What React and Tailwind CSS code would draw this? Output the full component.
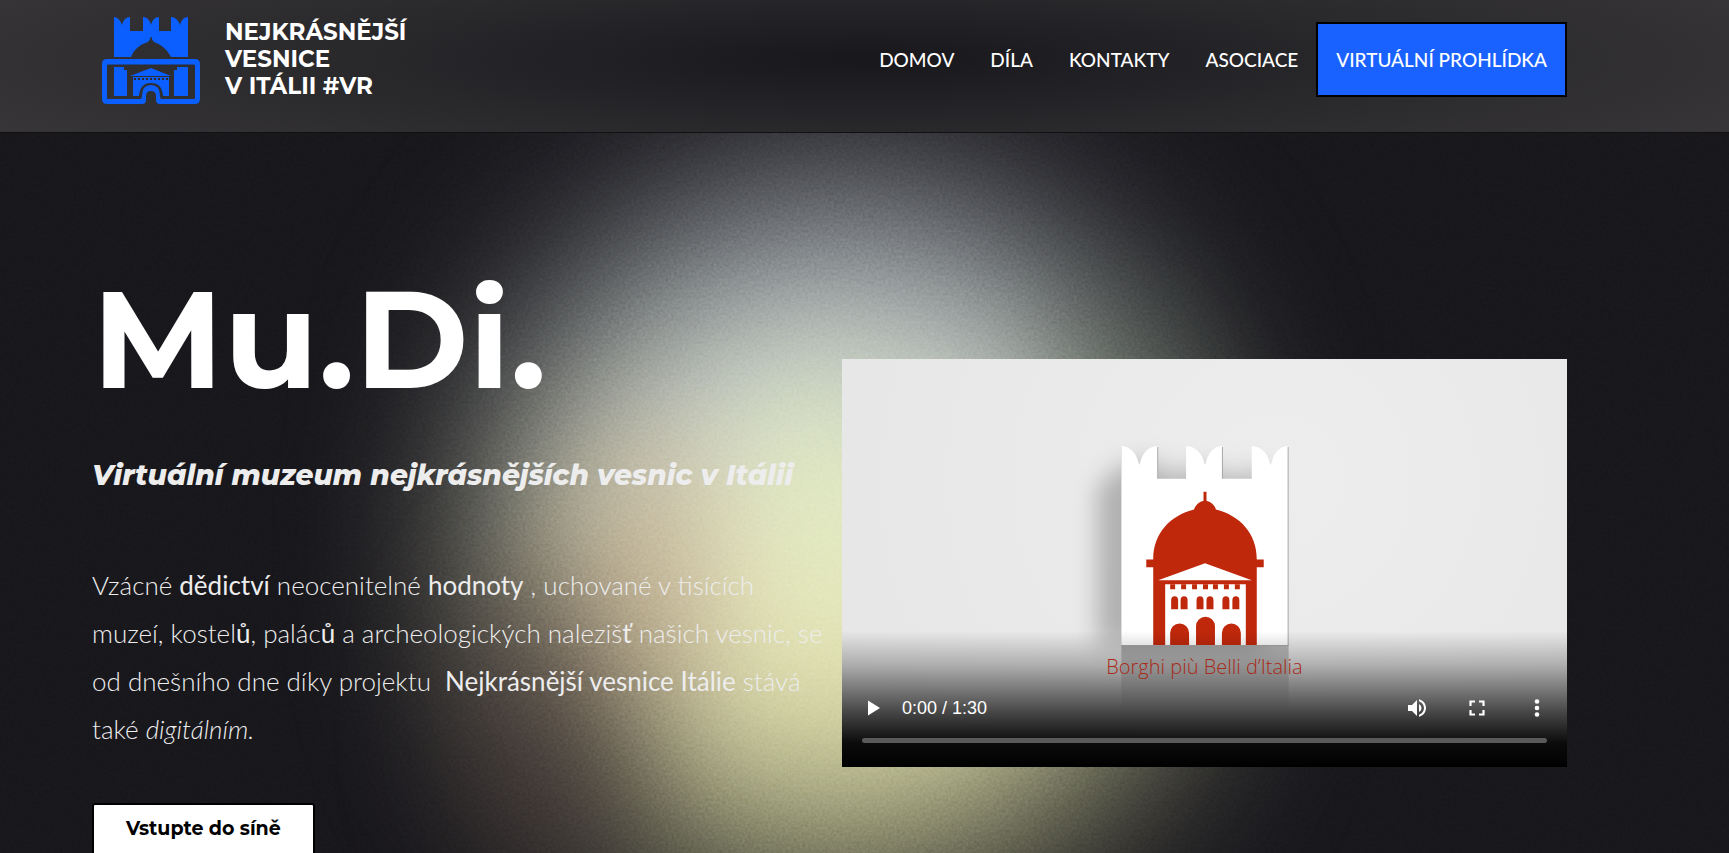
import React from "react";

const nav = ["DOMOV", "DÍLA", "KONTAKTY", "ASOCIACE"];

function Logo() {
  return (
    <svg viewBox="0 0 98 90" className="h-[90px] w-[98px] shrink-0" fill="#0b5fff" aria-hidden="true">
      <path d="M12 1Q17 1 20 9Q22 1 28 1V15H41V1Q47 1 49 9Q51 1 57 1V15H69V1Q75 1 78 9Q80 1 86 1V41H69C65 33 58 28 52 26Q50 24.500 49.500 21H48.500Q48 24.500 46 26C39 28 32 33 29 41H12Z" />
      <path d="M5 43H93Q98 43 98 48V83Q98 88 93 88H58Q54 88 54 84V80Q54 75 49 75T44 80V84Q44 88 40 88H5Q0 88 0 83V48Q0 43 5 43ZM6 48.500Q5 48.500 5 50V82Q5 83 6 83H38Q40 83 40 80Q40 69 49 69T58 80Q58 83 60 83H92Q93 83 93 82V50Q93 48.500 92 48.500Z" fillRule="evenodd" />
      <path d="M12 51H22V54H25V80H12ZM75 51H86V80H72V54H75ZM49 52L69 60H28ZM31 61H67V80H61Q60 67 49 67T37 80H31Z" />
      <path d="M33 62v2M37 62v2M41 62v2M45 62v2M49 62v2M53 62v2M57 62v2M61 62v2M65 62v2" stroke="#29282b" strokeWidth="2" />
    </svg>
  );
}

function Glow() {
  return (
    <svg viewBox="0 0 1729 720" preserveAspectRatio="none" className="absolute inset-0 -z-10 h-full w-full" aria-hidden="true">
      <defs>
        <filter id="blurL" x="-100%" y="-100%" width="300%" height="300%" colorInterpolationFilters="sRGB">
          <feGaussianBlur stdDeviation="100" />
        </filter>
        <filter id="blurS" x="-100%" y="-100%" width="300%" height="300%" colorInterpolationFilters="sRGB">
          <feGaussianBlur stdDeviation="60" />
        </filter>
        <filter id="grain" x="0" y="0" width="100%" height="100%" colorInterpolationFilters="sRGB">
          <feTurbulence type="fractalNoise" baseFrequency="0.35" numOctaves="2" seed="4" />
          <feColorMatrix type="saturate" values="0" />
          <feComponentTransfer><feFuncA type="linear" slope="0" intercept="1" /></feComponentTransfer>
        </filter>
        <linearGradient id="light" x1="0" y1="0" x2="0" y2="1">
          <stop offset="0" stopColor="#a9adb8" />
          <stop offset=".28" stopColor="#c8d2ce" />
          <stop offset=".46" stopColor="#e8ecd0" />
          <stop offset=".62" stopColor="#eae8ba" />
          <stop offset=".85" stopColor="#d2d29c" />
          <stop offset="1" stopColor="#b3b88c" />
        </linearGradient>
      </defs>
      <rect width="1729" height="720" fill="#18171c" />
      <ellipse cx="840" cy="405" rx="335" ry="345" fill="url(#light)" filter="url(#blurL)" />
      <ellipse cx="550" cy="600" rx="90" ry="160" fill="#3c3031" opacity=".65" filter="url(#blurS)" />
      <ellipse cx="650" cy="440" rx="80" ry="140" fill="#c0a488" opacity=".55" filter="url(#blurS)" />
      <ellipse cx="1130" cy="380" rx="70" ry="240" fill="#40503c" opacity=".35" filter="url(#blurS)" />
      <ellipse cx="820" cy="370" rx="50" ry="130" fill="#e6f2b8" opacity=".7" filter="url(#blurS)" />
      <rect width="1729" height="720" filter="url(#grain)" opacity=".16" className="mix-blend-overlay" />
    </svg>
  );
}

function Emblem() {
  return (
    <svg viewBox="0 0 260 250" className="absolute left-1/2 top-[16%] h-[61%] -translate-x-1/2 overflow-visible" aria-hidden="true">
      <defs>
        <filter id="soft" x="-50%" y="-50%" width="200%" height="200%">
          <feGaussianBlur stdDeviation="12" />
        </filter>
        <linearGradient id="floor" x1="0" y1="0" x2="0" y2="1">
          <stop offset="0" stopColor="#000" stopOpacity=".22" />
          <stop offset="1" stopColor="#000" stopOpacity="0" />
        </linearGradient>
      </defs>
      <path d="M22 64L48 40H90V55H102V46H150V55H170V46H190V222H22Z" fill="#777" opacity=".5" filter="url(#soft)" />
      <path d="M46 222H214V290H46Z" fill="url(#floor)" />
      <path d="M46 23Q60 24 64 41Q68 24 83 23V56H112V23Q126 24 130 41Q134 24 148 23V56H178V23Q192 24 196 41Q200 24 214 23V223H46Z" fill="#a9a5a5" />
      <path d="M46 22Q60 23 64 41Q68 23 82 22V55H111V22Q126 23 130 41Q134 23 147 22V55H177V22Q192 23 196 41Q200 23 213 22V222H46Z" fill="#fff" />
      <path d="M128.500 68H131.500V77Q139 79 141 86C165 92 182 110 182 136H189V144H182V222H78V144H71V136H78C78 110 95 92 119 86Q121 79 128.500 77Z" fill="#bf280b" />
      <path d="M130 140L177 157H83Z" fill="#fff" />
      <path d="M90 161H171V222H90Z" fill="#fff" />
      <g fill="#bf280b">
        <path d="M95 161h5v5h-5zM106 161h5v5h-5zM117 161h5v5h-5zM128 161h5v5h-5zM138 161h5v5h-5zM149 161h5v5h-5zM160 161h5v5h-5z" />
        <path d="M96 186V177a3.500 4 0 0 1 7 0V186ZM105.500 186V177a3.500 4 0 0 1 7 0V186ZM121.500 186V177a3.500 4 0 0 1 7 0V186ZM131.500 186V177a3.500 4 0 0 1 7 0V186ZM147.500 186V177a3.500 4 0 0 1 7 0V186ZM157.500 186V177a3.500 4 0 0 1 7 0V186Z" />
        <path d="M95 222V210a9.500 9.500 0 0 1 19 0V222ZM121 222V203a9.500 9.500 0 0 1 19 0V222ZM147 222V210a9.500 9.500 0 0 1 19 0V222Z" />
      </g>
    </svg>
  );
}

function Player() {
  return (
    <section aria-label="Video" className="relative aspect-[725/408] w-full overflow-hidden bg-[radial-gradient(circle_at_60%_30%,#ededed,#e6e6e6)]">
      <Emblem />
      <div className="absolute inset-x-0 bottom-0 flex h-[136px] flex-col justify-end bg-[linear-gradient(to_bottom,transparent,rgba(0,0,0,.25)_25%,rgba(0,0,0,.7)_60%,rgba(0,0,0,.95)_82%,#000)] px-5 pb-6 text-white">
        <div className="flex h-12 items-center">
          <button aria-label="Přehrát" className="flex size-6 items-center justify-center">
            <svg viewBox="0 0 24 24" className="size-6" fill="currentColor"><path d="M6 4.500V19.500L18 12Z" /></svg>
          </button>
          <span className="ml-4 font-['Liberation_Sans',sans-serif] text-[18px] leading-6">0:00 / 1:30</span>
          <div className="-mr-0.5 ml-auto flex items-center gap-9">
            <button aria-label="Zvuk">
              <svg viewBox="0 0 24 24" className="size-6" fill="currentColor"><path d="M3 9v6h4l5 5V4L7 9H3zm13.500 3A4.500 4.500 0 0 0 14 7.970v8.050c1.480-.73 2.500-2.250 2.500-4.020zM14 3.230v2.060c2.890.86 5 3.540 5 6.710s-2.110 5.850-5 6.710v2.060c4.010-.91 7-4.490 7-8.770s-2.990-7.860-7-8.770z" /></svg>
            </button>
            <button aria-label="Celá obrazovka">
              <svg viewBox="0 0 24 24" className="size-6" fill="none" stroke="currentColor" strokeWidth="2.200"><path d="M5.500 10V5.500H10M14 5.500h4.500V10M18.500 14v4.500H14M10 18.500H5.500V14" /></svg>
            </button>
            <button aria-label="Další možnosti">
              <svg viewBox="0 0 24 24" className="size-6" fill="currentColor"><circle cx="12" cy="5.500" r="2.300" /><circle cx="12" cy="12" r="2.300" /><circle cx="12" cy="18.500" r="2.300" /></svg>
            </button>
          </div>
        </div>
        <input type="range" aria-label="Pozice videa" defaultValue="0" className="mt-1.5 h-[5px] w-full appearance-none rounded-full bg-[#5a5a5a] [&::-webkit-slider-thumb]:size-0 [&::-webkit-slider-thumb]:appearance-none" />
      </div>
      <p className="absolute inset-x-0 top-[72%] text-center font-['Open_Sans',sans-serif] text-[20px] leading-7 font-light text-[#a82a18]">
        Borghi più Belli d’Italia
      </p>
    </section>
  );
}

export default function App() {
  return (
    <div className="flex h-screen flex-col overflow-hidden bg-[#18171c] font-[Lato,sans-serif] text-[#ededed]">
      <header className="flex h-[133px] shrink-0 items-start justify-between border-b border-[#111] bg-[radial-gradient(ellipse_60%_110%_at_50%_45%,#18171c,#29282b_50%,#383638)] pr-[162px] pl-[102px]">
        <a href="#" className="flex items-start gap-[25px] pt-4 font-[Montserrat,Inter,sans-serif] text-[23px] leading-[27px] font-bold text-white">
          <Logo />
          <span className="pt-[3px]">NEJKRÁSNĚJŠÍ<br />VESNICE<br />V ITÁLII #VR</span>
        </a>
        <nav className="mt-[22px] flex h-[75px] items-center text-[19px] leading-7 font-medium text-white">
          {nav.map((n) => (
            <a key={n} href="#" className="px-[18px]">{n}</a>
          ))}
          <a href="#" className="flex h-full items-center border-2 border-black bg-[#1a62ff] px-[18px]">VIRTUÁLNÍ PROHLÍDKA</a>
        </nav>
      </header>

      <main className="relative isolate grid min-h-0 flex-1 grid-cols-2 gap-[25px] overflow-hidden pr-[162px] pl-[92px]">
        <Glow />
        <div className="pt-[136px]">
          <h1 className="font-[Montserrat,Inter,sans-serif] text-[138px] leading-[140px] font-bold text-white">Mu.Di.</h1>
          <h2 className="mt-12 font-[Montserrat,Inter,sans-serif] text-[28px] leading-9 font-extrabold whitespace-nowrap italic">Virtuální muzeum nejkrásnějších vesnic v Itálii</h2>
          <p className="-mr-3 mt-[68px] text-[26px] leading-12 font-light">
            Vzácné <b>dědictví</b> neocenitelné <b>hodnoty</b> , uchované v tisících muzeí, kostel<b>ů</b>, palác<b>ů</b> a archeologických naleziš<b>ť</b> našich vesnic, se od dnešního dne díky projektu&nbsp; <b>Nejkrásnější vesnice Itálie</b> stává také <i>digitálním.</i>
          </p>
          <button className="mt-[50px] h-[56px] rounded-[3px] border-2 border-black bg-white px-8 pb-1 font-[Montserrat,Inter,sans-serif] text-[19px] font-bold text-black">Vstupte do síně</button>
        </div>
        <div className="pt-[226px]">
          <Player />
        </div>
      </main>
    </div>
  );
}
